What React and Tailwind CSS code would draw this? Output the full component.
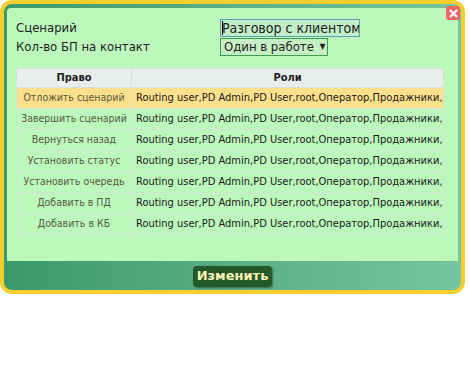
import React from 'react';

const rows = [
    'Отложить сценарий',
    'Завершить сценарий',
    'Вернуться назад',
    'Установить статус',
    'Установить очередь',
    'Добавить в ПД',
    'Добавить в КБ',
];

const roles = 'Routing user,PD Admin,PD User,root,Оператор,Продажники,';

const App = () => {
    return (
        <div className="w-[470px] h-[370px] bg-white" style={{ fontFamily: '"DejaVu Sans Condensed", "DejaVu Sans", sans-serif' }}>
            <div className="relative w-[465px] h-[294px] rounded-[12px] border-4 border-[#f6cf2e] bg-gradient-to-r from-[#3c986a] to-[#76c59f] flex flex-col px-[3px] pt-[4px]">
                <button className="absolute top-[2px] right-[1px] w-[14px] h-[14px] rounded-[3px] bg-[#f26363] flex items-center justify-center">
                    <svg width="9" height="9" viewBox="0 0 9 9">
                        <path d="M1.5 1.5 L7.5 7.5 M7.5 1.5 L1.5 7.5" stroke="white" strokeWidth="2.2" strokeLinecap="round" />
                    </svg>
                </button>

                <div className="h-[253px] bg-[#bcf8bc] rounded-tl-[4px] pl-[9px] pr-[11px] pt-[11px]">
                    <div className="flex">
                        <div className="w-[204px] text-[13px] text-[#1c1c1c] leading-[18px]">
                            <div>Сценарий</div>
                            <div className="mt-[1px]">Кол-во БП на контакт</div>
                        </div>
                        <div className="flex flex-col gap-[1px]">
                            <div className="relative w-[140px] h-[18px] border border-[#5d9fb0] bg-[#c2eec8] text-[14px] leading-[16px] text-[#1c1c1c] pl-[1px] whitespace-nowrap overflow-hidden">
                                <span className="absolute left-[1px] top-[1px] w-[1px] h-[14px] bg-black" />
                                Разговор с клиентом
                            </div>
                            <div className="w-[108px] h-[18px] border border-[#3e9e4c] bg-[#c6efc4] text-[13px] leading-[16px] text-[#1c1c1c] pl-[3px] flex items-center gap-[6px] whitespace-nowrap overflow-hidden">
                                <span>Один в работе</span>
                                <span className="text-[8px]">▼</span>
                            </div>
                        </div>
                    </div>

                    <table className="mt-[12px] w-[428px] border-collapse text-[11px]">
                        <thead>
                            <tr className="h-[19px] bg-[#e7eeeb]">
                                <th className="w-[115px] border border-[#d6e2d6] font-bold text-[#222]">Право</th>
                                <th className="border border-[#d6e2d6] font-bold text-[#222]">Роли</th>
                            </tr>
                        </thead>
                        <tbody>
                            {rows.map((r, i) => (
                                <tr key={r} className={i === 0 ? 'h-[21px] bg-[#fde08c]' : 'h-[21px]'}>
                                    <td className="border border-[#d2e2d2] text-center text-[10.5px] text-[#58583f] whitespace-nowrap">{r}</td>
                                    <td className="border border-[#d2e2d2] text-[#1a1a1a] pl-[4px] whitespace-nowrap overflow-hidden">{roles}</td>
                                </tr>
                            ))}
                        </tbody>
                    </table>
                </div>

                <div className="h-[29px] flex items-center justify-center pt-[1px]">
                    <button className="w-[79px] h-[21px] rounded-[4px] bg-[#245a2b] text-[#fff3b8] font-bold text-[13px] shadow-[1px_1px_2px_rgba(0,0,0,0.4)]" style={{ fontFamily: 'Verdana, "DejaVu Sans", sans-serif' }}>
                        Изменить
                    </button>
                </div>
            </div>
        </div>
    );
};

export default App;
